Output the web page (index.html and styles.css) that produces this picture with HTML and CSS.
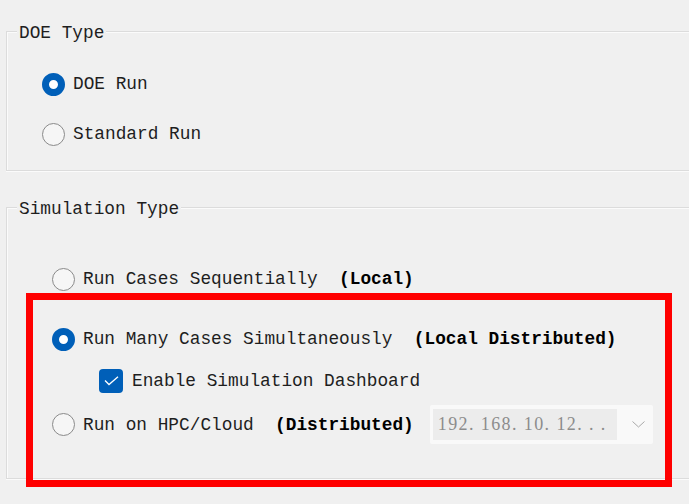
FILE: index.html
```html
<!DOCTYPE html>
<html>
<head>
<meta charset="utf-8">
<link rel="stylesheet" href="styles.css">
</head>
<body>
  <div class="group group-doe">
    <div class="group-title">DOE Type</div>
    <div class="row doe-row first">
      <span class="radio checked"></span><span class="label">DOE Run</span>
    </div>
    <div class="row doe-row second">
      <span class="radio"></span><span class="label">Standard Run</span>
    </div>
  </div>

  <div class="group group-sim">
    <div class="group-title">Simulation Type</div>
    <div class="row sim-row seq">
      <span class="radio"></span><span class="label">Run Cases Sequentially  <b>(Local)</b></span>
    </div>
    <div class="highlight">
      <div class="row hl-row many">
        <span class="radio checked"></span><span class="label">Run Many Cases Simultaneously  <b>(Local Distributed)</b></span>
      </div>
      <div class="row check-row">
        <span class="checkbox"><svg width="15" height="10" viewBox="0 0 15 10"><polyline points="1,4.5 5,8.5 14,0.8" fill="none" stroke="#fff" stroke-width="1.3"/></svg></span><span class="label">Enable Simulation Dashboard</span>
      </div>
      <div class="row hl-row hpc">
        <span class="radio"></span><span class="label">Run on HPC/Cloud  <b>(Distributed)</b></span>
        <div class="combo">
          <div class="combo-field">192. 168. 10. 12. . .</div>
          <svg class="chevron" width="13" height="7" viewBox="0 0 13 7"><polyline points="0.5,0.5 6.5,6 12.5,0.5" fill="none" stroke="#a9a9a9" stroke-width="1"/></svg>
        </div>
      </div>
    </div>
  </div>
</body>
</html>
```
FILE: styles.css
```css
html, body {
  margin: 0;
}
body {
  background: #f0f0f0;
  padding: 31px 0 0 6px;
  height: 504px;
  box-sizing: border-box;
  overflow: hidden;
  font-family: "Liberation Mono", monospace;
  font-size: 17.8px;
  color: #1e1e1e;
}
.group {
  border: 1px solid #dcdcdc;
  border-right: none;
  margin-right: -30px;
  box-shadow: inset 1px 1px 0 #fbfbfb, 0 1px 0 #fbfbfb;
}
.group-doe {
  padding-bottom: 24px;
}
.group-sim {
  margin-top: 36px;
}
.group-title {
  width: max-content;
  margin: -10px 0 0 10px;
  padding: 0 2px;
  line-height: 22px;
  background: #f0f0f0;
  white-space: pre;
}
.row {
  display: flex;
  align-items: center;
  height: 24px;
  white-space: pre;
}
.label b {
  color: #000;
  font-weight: bold;
}
.radio {
  flex: none;
  width: 23px;
  height: 23px;
  box-sizing: border-box;
  border-radius: 50%;
  border: 1.5px solid #8a8a8a;
  background: #f6f6f6;
  margin-right: 8px;
}
.radio.checked {
  border: 7px solid #005fb8;
  background: #fff;
}
.doe-row {
  padding-left: 35px;
}
.doe-row.first {
  margin-top: 28px;
}
.doe-row.second {
  margin-top: 26px;
}
.sim-row {
  padding-left: 45px;
}
.sim-row.seq {
  margin-top: 47px;
}
.highlight {
  width: 646px;
  box-sizing: border-box;
  margin: 2px 0 -9px 19px;
  border: 7px solid #ff0000;
  padding: 27px 0 36px 0;
}
.hl-row {
  padding-left: 19px;
}
.check-row {
  margin-top: 18px;
  padding-left: 66px;
}
.checkbox {
  flex: none;
  width: 24px;
  height: 24px;
  border-radius: 4px;
  background: #005fb8;
  margin-right: 9px;
  display: flex;
  align-items: center;
  justify-content: center;
}
.hpc {
  margin-top: 12px;
  height: 39px;
}
.combo {
  flex: none;
  margin-left: 16px;
  width: 223px;
  height: 39px;
  box-sizing: border-box;
  padding: 4px 3px;
  background: #f9f9f9;
  border-radius: 2px;
  display: flex;
  align-items: center;
}
.combo-field {
  width: 184px;
  height: 31px;
  box-sizing: border-box;
  padding-left: 5px;
  background: #ececec;
  font-family: "Liberation Serif", serif;
  font-size: 18px;
  letter-spacing: 1.4px;
  line-height: 31px;
  color: #8c8c8c;
  overflow: hidden;
}
.chevron {
  margin-left: 15px;
}
```
